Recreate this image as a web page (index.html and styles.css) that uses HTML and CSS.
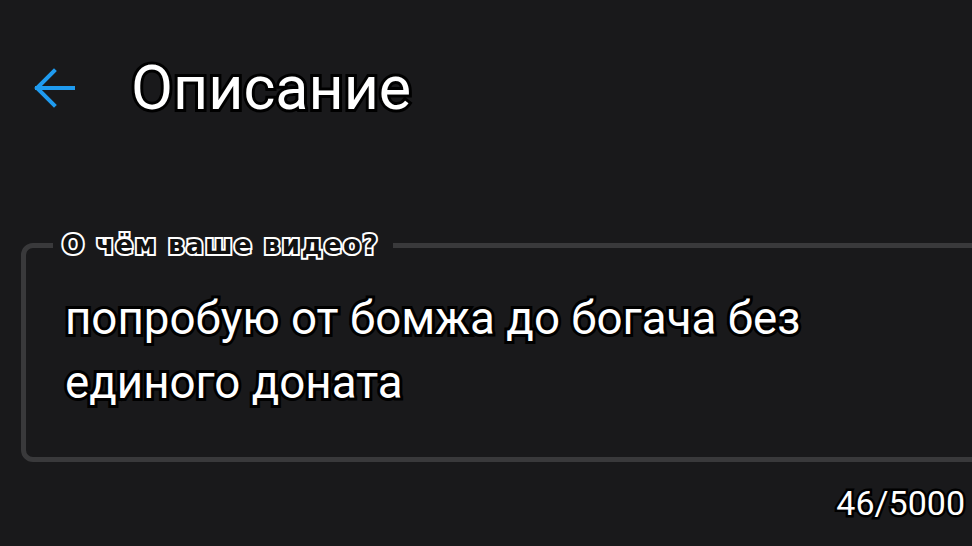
FILE: index.html
```html
<!DOCTYPE html>
<html lang="ru">
<head>
<meta charset="utf-8">
<title>Описание</title>
<link rel="stylesheet" href="styles.css">
</head>
<body>
<header class="topbar">
  <svg class="back" width="44" height="44" viewBox="0 0 44 44" aria-hidden="true">
    <path d="M41 22H5M22 5L5 22L22 39" fill="none" stroke="#1f9bf0" stroke-width="4" stroke-linecap="square" stroke-linejoin="miter"/>
  </svg>
  <h1 class="title">Описание</h1>
</header>
<main class="content">
  <fieldset class="field">
    <legend class="field-label">О чём ваше видео?</legend>
    <p class="field-text">попробую от бомжа до богача без<br>единого доната</p>
  </fieldset>
  <div class="counter">46/5000</div>
</main>
</body>
</html>
```
FILE: styles.css
```css
html, body {
  margin: 0;
  padding: 0;
  background: #19191b;
  overflow: hidden;
}
body {
  width: 972px;
  height: 546px;
  font-family: Roboto, "Noto Sans", sans-serif;
  color: #fff;
}
.topbar {
  height: 176px;
  display: flex;
  align-items: center;
  padding-left: 32px;
  box-sizing: border-box;
}
.back {
  display: block;
  flex: none;
}
.title {
  margin: 0 0 0 55px;
  font-size: 61px;
  font-weight: 400;
  line-height: 70px;
  color: #fff;
  -webkit-text-stroke: 6px #000;
  paint-order: stroke fill;
}
.content {
  margin-top: 54px;
}
.field {
  margin: 0 -40px 0 21px;
  padding: 27px 20px 42px 39px;
  border: 5px solid #39393b;
  border-radius: 12px;
  min-width: 0;
}
.field-label {
  margin-left: -12px;
  padding: 0 14px 0 9px;
  font-family: "DejaVu Sans", sans-serif;
  font-weight: 700;
  font-size: 26px;
  letter-spacing: 1.5px;
  line-height: 30px;
  color: #111;
  -webkit-text-stroke: 4px #fff;
  paint-order: stroke fill;
}
.field-text {
  margin: 0;
  font-size: 45.7px;
  line-height: 64px;
  color: #fff;
  -webkit-text-stroke: 6px #000;
  paint-order: stroke fill;
}
.counter {
  margin-top: 21px;
  padding-right: 7px;
  text-align: right;
  font-size: 34px;
  line-height: 40px;
  color: #fff;
  -webkit-text-stroke: 5px #000;
  paint-order: stroke fill;
}
```
